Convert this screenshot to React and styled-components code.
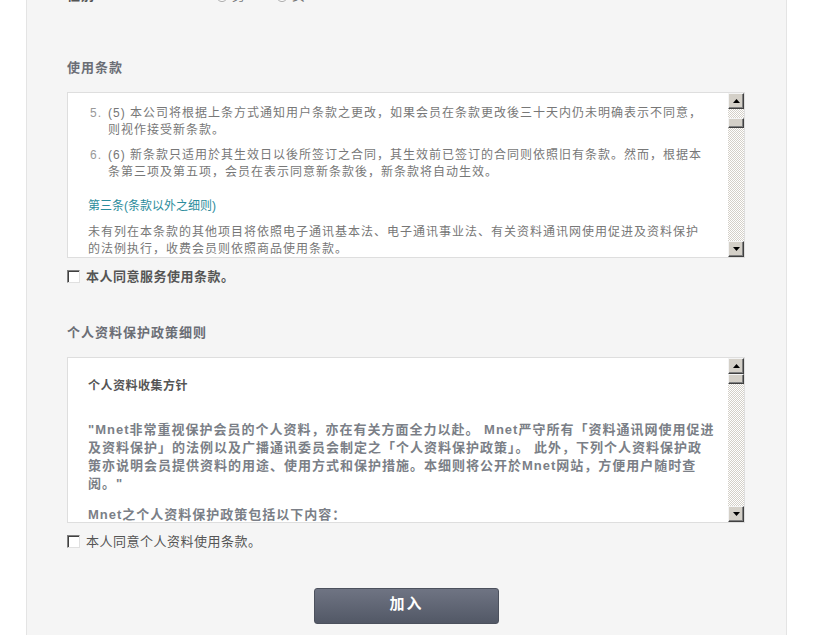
import React from 'react';
import styled, { createGlobalStyle } from 'styled-components';

const GlobalStyle = createGlobalStyle`
  body {
    margin: 0;
    background: #fff;
    font-family: "Liberation Sans", "Noto Sans CJK SC", sans-serif;
  }
`;

const TERMS = [
  {
    no: '5.',
    lines: [
      '(5) 本公司将根据上条方式通知用户条款之更改，如果会员在条款更改後三十天内仍未明确表示不同意，',
      '则视作接受新条款。',
    ],
  },
  {
    no: '6.',
    lines: [
      '(6) 新条款只适用於其生效日以後所签订之合同，其生效前已签订的合同则依照旧有条款。然而，根据本',
      '条第三项及第五项，会员在表示同意新条款後，新条款将自动生效。',
    ],
  },
];

const PRIVACY = [
  '"Mnet非常重视保护会员的个人资料，亦在有关方面全力以赴。 Mnet严守所有「资料通讯网使用促进',
  '及资料保护」的法例以及广播通讯委员会制定之「个人资料保护政策」。 此外，下列个人资料保护政',
  '策亦说明会员提供资料的用途、使用方式和保护措施。本细则将公开於Mnet网站，方便用户随时查',
  '阅。"',
];

function Lines({ lines }) {
  return lines.map((l, i) => (
    <React.Fragment key={i}>
      {i > 0 && <br />}
      {l}
    </React.Fragment>
  ));
}

function Arrow({ down }) {
  return (
    <svg width="7" height="4" viewBox="0 0 7 4">
      <polygon points={down ? '0,0 7,0 3.5,4' : '0,4 7,4 3.5,0'} fill="#000" />
    </svg>
  );
}

function ScrollBar({ offset }) {
  return (
    <Bar>
      <BarButton>
        <Arrow />
      </BarButton>
      <Track>
        <Thumb $offset={offset} />
      </Track>
      <BarButton>
        <Arrow down />
      </BarButton>
    </Bar>
  );
}

function Agree({ children, bold }) {
  return (
    <AgreeRow $bold={bold}>
      <Check />
      {children}
    </AgreeRow>
  );
}

export default function App() {
  return (
    <Page>
      <GlobalStyle />
      <Panel>
        {/* previous form row, mostly scrolled out of view */}
        <FormRow>
          <FieldLabel>性别</FieldLabel>
          <Choice>
            <Radio /> 男
          </Choice>
          <Choice>
            <Radio /> 女
          </Choice>
        </FormRow>

        <Title $top={55}>使用条款</Title>
        <TextBox>
          <BoxContent $pad={12}>
            {TERMS.map((t) => (
              <Item key={t.no}>
                <Num>{t.no}</Num>
                <span>
                  <Lines lines={t.lines} />
                </span>
              </Item>
            ))}
            <Article>第三条(条款以外之细则)</Article>
            <Plain>
              <Lines
                lines={[
                  '未有列在本条款的其他项目将依照电子通讯基本法、电子通讯事业法、有关资料通讯网使用促进及资料保护',
                  '的法例执行，收费会员则依照商品使用条款。',
                ]}
              />
            </Plain>
          </BoxContent>
          <ScrollBar offset={9} />
        </TextBox>
        <Agree bold>本人同意服务使用条款。</Agree>

        <Title $top={39}>个人资料保护政策细则</Title>
        <TextBox>
          <BoxContent $pad={20}>
            <SubHead>个人资料收集方针</SubHead>
            <Strong>
              <Lines lines={PRIVACY} />
            </Strong>
            <Strong $top={13}>Mnet之个人资料保护政策包括以下内容：</Strong>
          </BoxContent>
          <ScrollBar offset={0} />
        </TextBox>
        <Agree>本人同意个人资料使用条款。</Agree>

        <ButtonBar>
          <JoinButton type="button">加入</JoinButton>
        </ButtonBar>
      </Panel>
    </Page>
  );
}

const Page = styled.div`
  padding-left: 26px;
  overflow: hidden;
  height: 635px;
`;

const Panel = styled.div`
  width: 761px;
  min-height: 635px;
  box-sizing: border-box;
  padding: 0 40px 40px;
  background: #f5f5f5;
  border-left: 1px solid #e4e4e4;
  border-right: 1px solid #e4e4e4;
`;

const FormRow = styled.div`
  display: flex;
  align-items: center;
  margin-top: -13px;
  height: 17px;
  font-size: 13px;
  line-height: 17px;
  color: #777;
`;

const FieldLabel = styled.span`
  width: 149px;
  font-weight: bold;
  letter-spacing: 1px;
  color: #555;
`;

const Choice = styled.span`
  display: inline-flex;
  align-items: center;
  gap: 4px;
  width: 60px;
`;

const Radio = styled.span`
  width: 10px;
  height: 10px;
  border-radius: 50%;
  border: 1px solid #aaa;
  background: #fff;
`;

const Title = styled.h3`
  margin: ${(p) => p.$top}px 0 16px;
  font-size: 13px;
  line-height: 17px;
  font-weight: bold;
  letter-spacing: 1px;
  color: #6b6e75;
`;

const TextBox = styled.div`
  display: flex;
  width: 678px;
  height: 166px;
  box-sizing: border-box;
  border: 1px solid #dedede;
  background: #fff;
`;

const BoxContent = styled.div`
  flex: 1;
  overflow: hidden;
  padding: ${(p) => p.$pad}px 10px 0 20px;
  white-space: nowrap;
`;

const Item = styled.div`
  display: flex;
  margin-bottom: 8px;
  font-size: 12px;
  line-height: 17px;
  letter-spacing: 1px;
  color: #777;
`;

const Num = styled.span`
  width: 20px;
  flex: none;
  padding-left: 2px;
  box-sizing: border-box;
  color: #999;
`;

const Article = styled.p`
  margin: 17px 0 9px;
  font-size: 12px;
  line-height: 17px;
  color: #2b8c9c;
`;

const Plain = styled.p`
  margin: 0;
  font-size: 12px;
  line-height: 17px;
  letter-spacing: 1px;
  color: #777;
`;

const SubHead = styled.p`
  margin: 0 0 26px;
  font-size: 12px;
  line-height: 17px;
  font-weight: bold;
  letter-spacing: 0.5px;
  color: #555;
`;

const Strong = styled.p`
  margin: ${(p) => p.$top || 0}px 0 0;
  font-size: 13px;
  line-height: 18px;
  font-weight: bold;
  letter-spacing: 1px;
  color: #7b7f87;
`;

const Bar = styled.div`
  width: 16px;
  flex: none;
  display: flex;
  flex-direction: column;
`;

const BarButton = styled.div`
  height: 16px;
  flex: none;
  box-sizing: border-box;
  display: flex;
  align-items: center;
  justify-content: center;
  background: #d4d0c8;
  border: 1px solid;
  border-color: #f4f4f4 #404040 #404040 #f4f4f4;
  box-shadow: inset -1px -1px #808080;
`;

const Track = styled.div`
  flex: 1;
  background: repeating-conic-gradient(#d4d0c8 0 25%, #fff 0 50%) 0 0 / 2px 2px;
`;

const Thumb = styled.div`
  height: 10px;
  margin-top: ${(p) => p.$offset}px;
  box-sizing: border-box;
  background: #d4d0c8;
  border: 1px solid;
  border-color: #f4f4f4 #404040 #404040 #f4f4f4;
  box-shadow: inset -1px -1px #808080;
`;

const AgreeRow = styled.label`
  display: flex;
  align-items: center;
  gap: 6px;
  margin-top: 10px;
  font-size: 13px;
  line-height: 17px;
  font-weight: ${(p) => (p.$bold ? 'bold' : 'normal')};
  letter-spacing: 0.5px;
  color: #555;
`;

const Check = styled.span`
  width: 13px;
  height: 13px;
  box-sizing: border-box;
  background: #fff;
  border: 1px solid;
  border-color: #808080 #e0e0e0 #e0e0e0 #808080;
  box-shadow: inset 1px 1px #404040;
`;

const ButtonBar = styled.div`
  display: flex;
  justify-content: center;
  margin-top: 38px;
`;

const JoinButton = styled.button`
  width: 185px;
  height: 36px;
  padding: 0 0 5px;
  border: 1px solid #4c515d;
  border-radius: 3px;
  background: linear-gradient(#6f7483, #525866);
  color: #fff;
  font-family: "Liberation Sans", "Noto Sans CJK SC", sans-serif;
  font-size: 15px;
  line-height: 1;
  font-weight: bold;
  letter-spacing: 2px;
  cursor: pointer;
`;
